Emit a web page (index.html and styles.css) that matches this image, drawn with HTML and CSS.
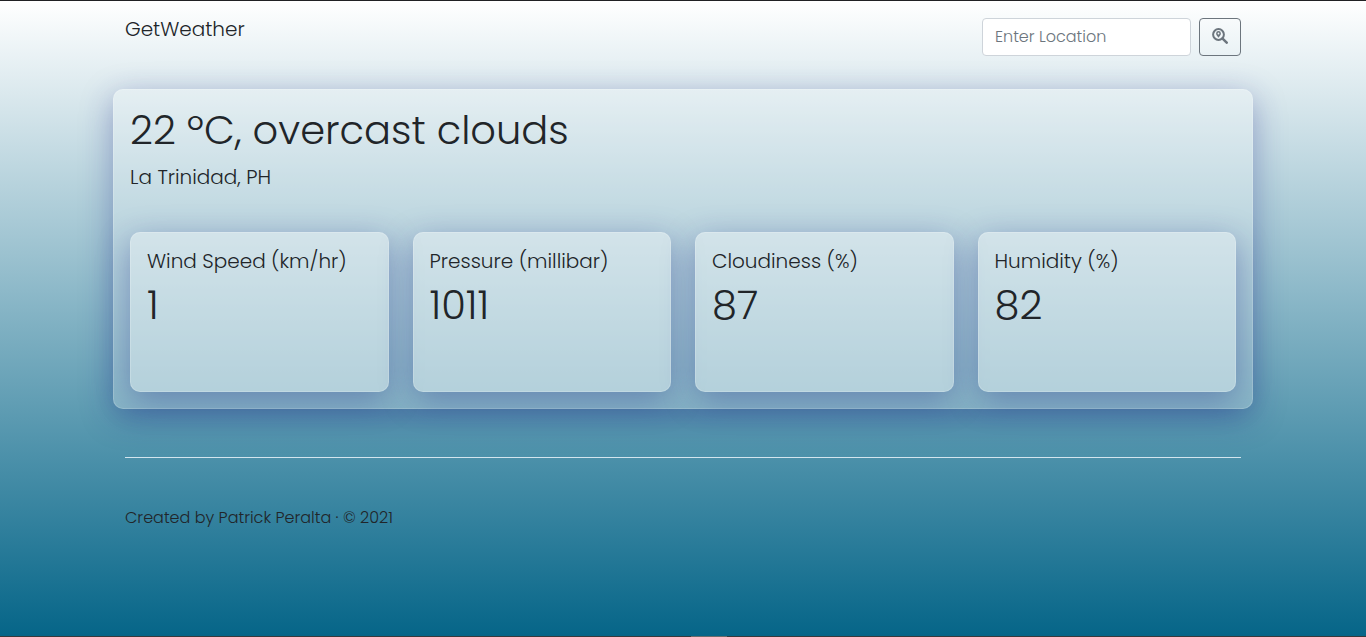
FILE: index.html
```html
<!DOCTYPE html>
<html lang="en">
<head>
<meta charset="utf-8">
<meta name="viewport" content="width=device-width, initial-scale=1">
<title>GetWeather</title>
<link rel="stylesheet" href="styles.css">
</head>
<body>
<div class="page">
  <div class="container">
    <header class="navbar">
      <a class="brand" href="#">GetWeather</a>
      <form class="search">
        <input class="search-input" type="text" placeholder="Enter Location" aria-label="Enter Location">
        <button class="search-button" type="submit" aria-label="Search">
          <svg class="search-icon" viewBox="0 0 16 16" aria-hidden="true">
            <circle cx="6.5" cy="6.5" r="5.4" fill="none" stroke="currentColor" stroke-width="2"/>
            <path d="M10.6 10.6 14.7 14.7" fill="none" stroke="currentColor" stroke-width="2.5" stroke-linecap="round"/>
            <path fill="currentColor" fill-rule="evenodd" d="M6.5 3.1a2.4 2.4 0 0 0-2.4 2.4C4.100 7.200 5.700 8.700 6.500 9.700 7.300 8.700 8.900 7.200 8.900 5.500A2.400 2.400 0 0 0 6.500 3.100ZM6.500 4.600a.9.900 0 1 1 0 1.800.9.900 0 0 1 0-1.800Z"/>
          </svg>
        </button>
      </form>
    </header>
    <main class="glass weather">
      <h1 class="value">22 ºC, overcast clouds</h1>
      <p class="place">La Trinidad, PH</p>
      <div class="stats">
        <section class="glass stat">
          <h2 class="label">Wind Speed (km/hr)</h2>
          <p class="value">1</p>
        </section>
        <section class="glass stat">
          <h2 class="label">Pressure (millibar)</h2>
          <p class="value">1011</p>
        </section>
        <section class="glass stat">
          <h2 class="label">Cloudiness (%)</h2>
          <p class="value">87</p>
        </section>
        <section class="glass stat">
          <h2 class="label">Humidity (%)</h2>
          <p class="value">82</p>
        </section>
      </div>
    </main>
    <hr class="divider">
    <footer class="footer">Created by Patrick Peralta · © 2021</footer>
  </div>
  <div class="bottom-bar"><span class="bottom-handle"></span></div>
</div>
</body>
</html>
```

FILE: styles.css
```css
* {
  box-sizing: border-box;
}

body {
  margin: 0;
  color: #212529;
  font-family: Poppins, Inter, sans-serif;
  font-size: 16px;
  font-weight: 300;
  line-height: 24px;
}

.page {
  display: flex;
  flex-direction: column;
  min-height: 100vh;
  border-top: 1px solid #212124;
  background: linear-gradient(#ffffff, #056588);
}

.container {
  width: 100%;
  max-width: 1140px;
  margin: 0 auto;
  flex: 1;
}

.navbar {
  display: flex;
  align-items: flex-start;
  justify-content: space-between;
  padding: 17px 12px 33px;
}

.brand {
  color: inherit;
  font-size: 20px;
  line-height: 22px;
  text-decoration: none;
}

.search {
  display: flex;
  gap: 8px;
}

.search-input {
  width: 209px;
  height: 38px;
  padding: 5px 12px 7px;
  border: 1px solid #ced4da;
  border-radius: 4px;
  background: #ffffff;
  color: #212529;
  font: inherit;
}

.search-input::placeholder {
  color: #6c757d;
  opacity: 1;
}

.search-button {
  display: flex;
  justify-content: center;
  width: 42px;
  height: 38px;
  padding: 9px 12px;
  border: 1px solid #6c757d;
  border-radius: 4px;
  background: transparent;
  color: #6c757d;
}

.search-icon {
  width: 16px;
  height: 16px;
}

.glass {
  border: 1px solid rgba(255, 255, 255, 0.18);
  border-radius: 10px;
  background: rgba(255, 255, 255, 0.25);
  box-shadow: 0 8px 32px 0 rgba(31, 38, 135, 0.37);
}

.weather {
  padding: 16px;
}

.value {
  margin: 0 0 8px;
  font-size: 40px;
  font-weight: 300;
  line-height: 48px;
}

.place {
  margin: 0 0 40px;
  font-size: 20px;
  line-height: 30px;
}

.stats {
  display: grid;
  grid-template-columns: repeat(4, 1fr);
  gap: 24px;
}

.stat {
  min-height: 160px;
  padding: 16px;
  background: rgba(255, 255, 255, 0.35);
}

.label {
  margin: 0 0 8px;
  font-size: 20px;
  font-weight: 300;
  line-height: 24px;
}

.divider {
  height: 1px;
  margin: 48px 12px;
  border: 0;
  background: #d3e5ee;
}

.footer {
  padding: 0 12px 48px;
}

.bottom-bar {
  display: flex;
  justify-content: center;
  height: 1px;
  background: #38393c;
}

.bottom-handle {
  width: 36px;
  margin-left: 52px;
  background: #6b6b6b;
}
```
